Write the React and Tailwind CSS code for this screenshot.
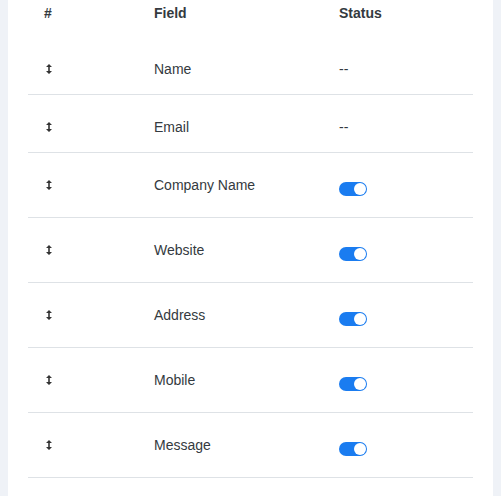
import React from 'react';

const rows = [
    { name: 'Name', toggle: false },
    { name: 'Email', toggle: false },
    { name: 'Company Name', toggle: true },
    { name: 'Website', toggle: true },
    { name: 'Address', toggle: true },
    { name: 'Mobile', toggle: true },
    { name: 'Message', toggle: true },
];

const SortIcon = () => (
    <svg width="6" height="10" viewBox="0 0 6 10" className="block">
        <path d="M3 0 L6 3 L3.8 3 L3.8 7 L6 7 L3 10 L0 7 L2.2 7 L2.2 3 L0 3 Z" fill="#333" />
    </svg>
);

const Toggle = () => (
    <div className="w-[28px] h-[14px] rounded-full bg-[#1a7cf0] flex items-center justify-end pr-[1px]">
        <div className="w-[12px] h-[12px] rounded-full bg-white" />
    </div>
);

const App = () => {
    return (
        <div className="min-h-[496px] bg-[#eff2f7] px-[8px] font-['Liberation_Sans',Arial,sans-serif] text-[14px] leading-[20px] text-[#343a40]">
            <div className="bg-white min-h-[496px] px-[20px]">
                {/* header */}
                <div className="flex h-[37px] pt-[3px] font-bold">
                    <div className="w-[110px] pl-[16px]">#</div>
                    <div className="w-[185px] pl-[16px]">Field</div>
                    <div className="flex-1 pl-[16px]">Status</div>
                </div>

                {rows.map((row) => (
                    <div
                        key={row.name}
                        className={`flex border-b border-[#dee2e6] ${row.toggle ? 'pt-[22px] pb-[21px]' : 'pt-[22px] pb-[15px]'}`}
                    >
                        <div className="w-[110px] pl-[18px] h-[20px] flex items-center">
                            <SortIcon />
                        </div>
                        <div className="w-[185px] pl-[16px]">{row.name}</div>
                        <div className="flex-1 pl-[16px]">
                            {row.toggle ? (
                                <div className="pt-[7px]"><Toggle /></div>
                            ) : (
                                <span>--</span>
                            )}
                        </div>
                    </div>
                ))}
            </div>
        </div>
    );
};

export default App;
